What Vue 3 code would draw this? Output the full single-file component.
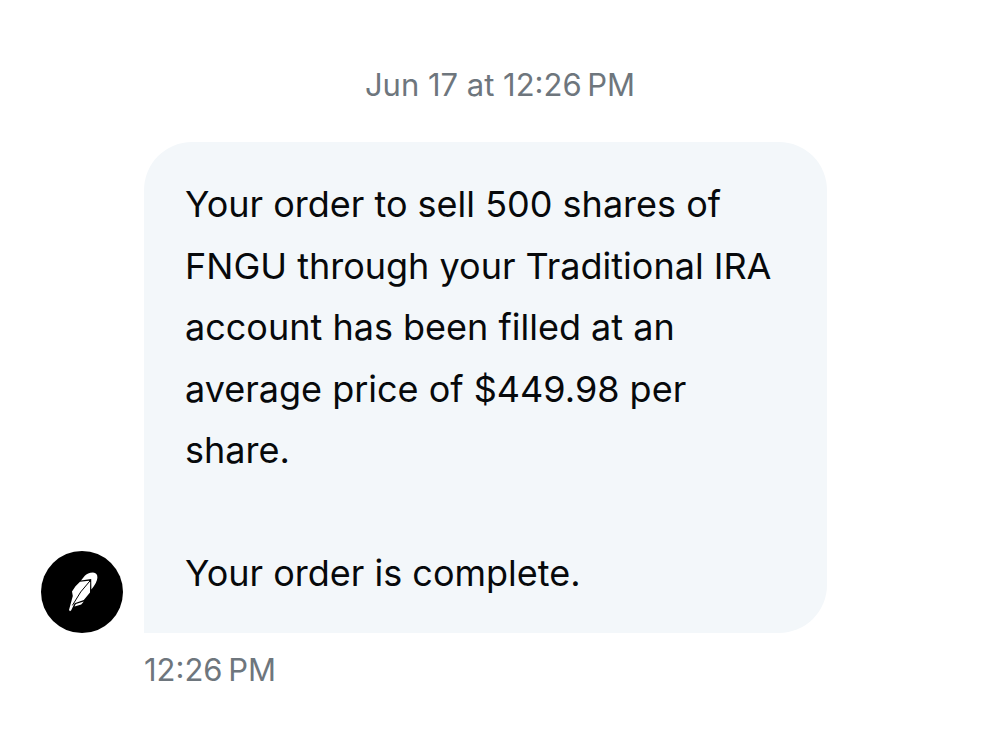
<script setup>
const day = 'Jun 17 at 12:26\u202fPM'
const time = '12:26\u202fPM'
const paragraphs = [
  'Your order to sell 500 shares of FNGU through your Traditional IRA account has been filled at an average price of $449.98 per share.',
  'Your order is complete.',
]
</script>

<template>
  <main class="thread">
    <time class="day">{{ day }}</time>
    <article class="message">
      <div class="avatar" role="img" aria-label="Robinhood">
        <svg viewBox="0 0 82 82" aria-hidden="true">
          <path fill="#fff" d="M40 29.4 L43.8 24.8 Q46.5 22 52 21.6 Q56.6 22 56.4 26.8 Q56 32 50.4 38.4 L50.2 28 Z" />
          <path fill="#fff" d="M48 29.8 L39 30.8 L34.5 35.2 L31 40.4 L31.8 45 L28 59 L29 60.2 L30.2 59.2 L33.6 52.2 L42.8 49 L49 41.5 L49.2 31 Z" />
          <path fill="#fff" d="M34.8 53.1 L42.8 50.4 L40.2 53.4 L33.5 55.4 Z" />
          <path fill="none" stroke="#000" stroke-width="1" stroke-linecap="round" d="M49.2 29.6 Q39 40 31.6 54" />
        </svg>
      </div>
      <div class="bubble">
        <p v-for="text in paragraphs" :key="text">{{ text }}</p>
      </div>
      <time class="sent">{{ time }}</time>
    </article>
  </main>
</template>

<style>
body { background: #fff; }
</style>

<style scoped>
.thread { padding: 64px 0 48px; font-family: Inter, "Liberation Sans", sans-serif; color: #07090b; }
.day { display: block; text-align: center; font-size: 31px; line-height: 42px; color: #6e767d; }
.message { display: grid; grid-template-columns: 82px minmax(0, 683px); column-gap: 21px; margin: 36px 40px 0 41px; }
.avatar { align-self: end; width: 82px; height: 82px; border-radius: 50%; background: #000; }
.avatar svg { display: block; }
.bubble { padding: 32px 41px 29px; border-radius: 48px 48px 48px 0; background: #f3f7fa; }
.bubble p { margin: 0; font-size: 36px; line-height: 1.71; }
.bubble p + p { margin-top: 61px; }
.sent { grid-column: 2; margin-top: 16px; font-size: 31px; line-height: 42px; color: #6e767d; }
</style>
